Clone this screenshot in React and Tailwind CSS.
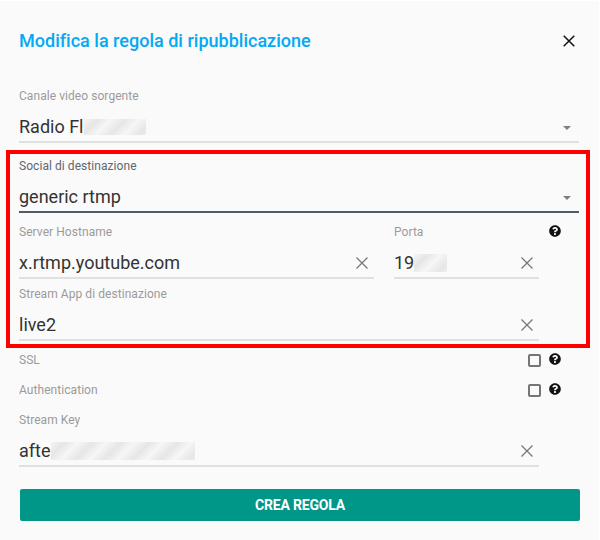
import { FaQuestionCircle } from 'react-icons/fa'

function ClearIcon() {
  return (
    <svg width="14" height="14" viewBox="0 0 14 14" className="mr-[5px] shrink-0 text-[#757575]">
      <path d="M1.5 1.5 L12.5 12.5 M12.5 1.5 L1.5 12.5" stroke="currentColor" strokeWidth="1.2" fill="none" />
    </svg>
  )
}

function Arrow() {
  return <div className="mt-[2px] mr-[8px] h-0 w-0 border-x-[4px] border-t-[4px] border-x-transparent border-t-[#808080]" />
}

function Smudge({ className }) {
  return (
    <div
      className={`bg-[repeating-linear-gradient(135deg,#f5f5f5_0px,#e6e6e6_10px,#f7f7f7_20px)] blur-[0.5px] ${className}`}
    />
  )
}

function Field({ label, active, className, children }) {
  return (
    <div className={className}>
      <div className={`h-[18px] text-xs leading-[18px] tracking-[0.06px] ${active ? 'text-[#5f6670]' : 'text-[#9a9a9a]'}`}>
        {label}
      </div>
      <div
        className={`flex h-[38px] items-center justify-between border-b-2 pt-[7px] text-lg text-[#333] ${
          active ? 'border-[#515b66]' : 'border-[#e0e0e0]'
        }`}
      >
        {children}
      </div>
    </div>
  )
}

function Value({ text, smudge }) {
  return (
    <div className="flex items-center">
      <span>{text}</span>
      {smudge}
    </div>
  )
}

function CheckRow({ label, className }) {
  return (
    <div className={`flex h-[18px] items-center ${className}`}>
      <span className="w-[509px] text-xs tracking-[0.06px] text-[#9a9a9a]">{label}</span>
      <div className="h-[13px] w-[13px] rounded-[2px] border-2 border-[#757575]" />
      <FaQuestionCircle className="mb-[2px] ml-2 text-xs text-[#111]" />
    </div>
  )
}

export default function App() {
  return (
    <div className="relative mt-px h-[539px] w-[599px] overflow-hidden bg-[#fafafa] font-['Roboto',sans-serif]">
      <div className="flex items-center justify-between pt-[28px] pr-[24px] pl-[19px]">
        <h1 className="text-lg leading-6 font-medium tracking-[0.01px] text-[#03a9f4]">Modifica la regola di ripubblicazione</h1>
        <svg width="12" height="12" viewBox="0 0 12 12" className="text-[#111]">
          <path d="M0.7 0.7 L11.3 11.3 M11.3 0.7 L0.7 11.3" stroke="currentColor" strokeWidth="1.5" fill="none" />
        </svg>
      </div>

      <div className="px-[19px] pt-[34px]">
        <Field label="Canale video sorgente" className="w-[560px]">
          <Value text="Radio Fl" smudge={<Smudge className="ml-px h-4 w-[62px]" />} />
          <Arrow />
        </Field>

        <Field label="Social di destinazione" active className="mt-[14px] w-[560px]">
          <span>generic rtmp</span>
          <Arrow />
        </Field>

        <div className="mt-[10px] flex items-start">
          <Field label="Server Hostname" className="w-[355px]">
            <span>x.rtmp.youtube.com</span>
            <ClearIcon />
          </Field>
          <Field label="Porta" className="ml-5 w-[145px]">
            <Value text="19" smudge={<Smudge className="h-[18px] w-[33px]" />} />
            <ClearIcon />
          </Field>
          <FaQuestionCircle className="mt-[2px] ml-[10px] text-xs text-[#111]" />
        </div>

        <Field label="Stream App di destinazione" className="mt-[6px] w-[520px]">
          <span>live2</span>
          <ClearIcon />
        </Field>

        <CheckRow label="SSL" className="mt-[10px]" />
        <CheckRow label="Authentication" className="mt-[12px]" />

        <Field label="Stream Key" className="mt-[12px] w-[520px]">
          <Value text="afte" smudge={<Smudge className="ml-px h-[18px] w-[144px]" />} />
          <ClearIcon />
        </Field>

        <button className="mt-[22px] ml-px flex h-8 w-[560px] items-center justify-center rounded-[2px] bg-[#009688] text-sm font-bold tracking-[-0.2px] text-white">
          CREA REGOLA
        </button>
      </div>

      <div className="absolute top-[149px] left-[6px] h-[198px] w-[584px] border-4 border-[#ff0000]" />
    </div>
  )
}
